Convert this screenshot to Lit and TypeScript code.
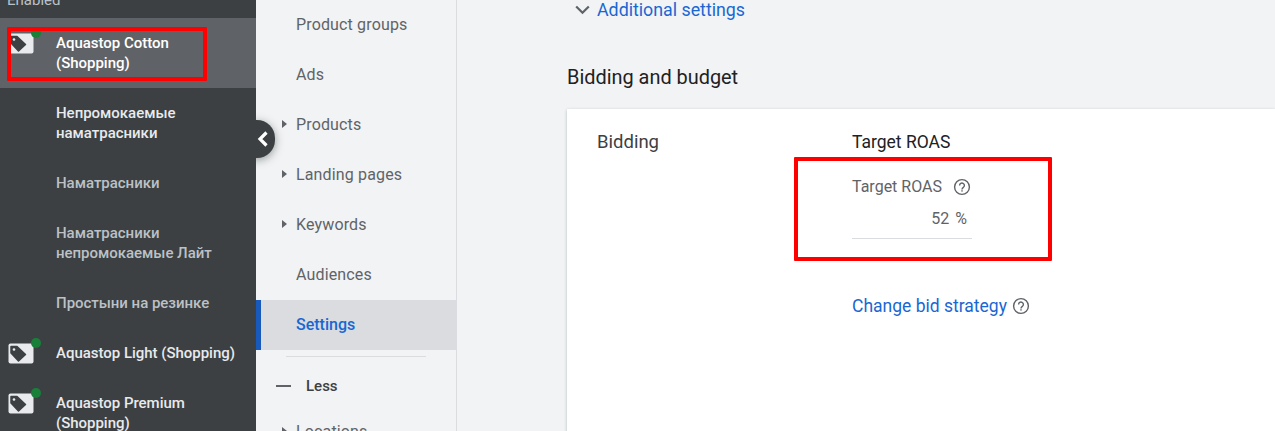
import { LitElement, html, css, svg } from "lit";
import { customElement } from "lit/decorators.js";

const help = svg`<svg class="help" width="18" height="18" viewBox="0 0 18 18"><circle cx="9" cy="9" r="7.4" fill="none" stroke="#5f6368" stroke-width="1.4"/><path d="M6.6 7.400a2.400 2.400 0 1 1 3.900 1.900c-.9.7-1.500 1.100-1.500 2.200" fill="none" stroke="#5f6368" stroke-width="1.400"/><rect x="8.300" y="12.200" width="1.400" height="1.400" fill="#5f6368"/></svg>`;

const campaignIcon = html`<span class="ci"><svg width="26" height="21" viewBox="0 0 26 21"><rect x=".5" y=".5" width="25" height="20" rx="2" fill="#e8eaed"/><path d="M3 3.500H9L17.500 11.500 10.500 18 3 10z" fill="#3c4043" stroke="#3c4043" stroke-width="1.500" stroke-linejoin="round"/><circle cx="6" cy="6.500" r="1.300" fill="#e8eaed"/></svg><i></i></span>`;

@customElement("app-root")
export class AppRoot extends LitElement {
  static styles = css`
    :host { display: block; position: relative; width: 1275px; height: 431px; overflow: hidden; background: #f1f3f4; font-family: Roboto, "Noto Sans", sans-serif; color: #3c4043; }
    .page { display: flex; height: 431px; align-items: flex-start; }
    .side { width: 256px; height: 431px; flex: none; background: #3c4043; overflow: hidden; font-size: 15px; color: #e8eaed; font-weight: 400; }
    .en { height: 18px; display: flex; align-items: flex-end; padding-left: 7px; color: #bdc1c6; line-height: 20px; overflow: hidden; }
    .en span { display: block; margin-bottom: 8px; }
    .row { position: relative; display: flex; align-items: center; box-sizing: border-box; padding: 0 30px 0 56px; height: 50px; line-height: 20px; font-weight: 500; letter-spacing: -.02px; }
    .row.tall { height: 70px; }
    .row.on { background: #5f6368; color: #fff; }
    .row.dim { color: #bdc1c6; }
    .nowrap { white-space: nowrap; }
    .ci { position: absolute; left: 8px; top: 15px; width: 26px; height: 21px; }
    .ci svg { display: block; }
    .ci i { position: absolute; left: 23px; top: -5px; width: 10px; height: 10px; border-radius: 50%; background: #188038; }
    .toggle { position: absolute; left: 239px; top: 120px; width: 36px; height: 38px; border-radius: 19px; background: #3c4043; box-shadow: 0 2px 8px rgba(60,64,67,.5); display: flex; align-items: center; justify-content: center; clip-path: inset(-12px -12px -12px 17px); padding-left: 12px; box-sizing: border-box; }
    .nav { width: 201px; height: 431px; flex: none; box-sizing: border-box; border-right: 1px solid #dadce0; font-size: 16px; letter-spacing: .15px; color: #5f6368; overflow: hidden; }
    .nav .it { position: relative; height: 50px; padding-left: 40px; box-sizing: border-box; display: flex; align-items: center; line-height: 20px; }
    .nav .it.arrow::before { content: ""; position: absolute; left: 26px; top: 50%; margin-top: -5px; border-left: 5px solid #5f6368; border-top: 4px solid transparent; border-bottom: 4px solid transparent; }
    .nav .it.sel { background: #dadce0; color: #1967d2; font-weight: 500; border-left: 5px solid #185abc; padding-left: 35px; letter-spacing: 0; }
    .nav hr { margin: 6px 30px 0; border: 0; border-top: 1px solid #dadce0; height: 0; }
    .nav .less { display: flex; align-items: center; gap: 15px; height: 50px; padding-left: 20px; margin-top: 4px; font-size: 15px; letter-spacing: 0; font-weight: 500; color: #3c4043; }
    .nav .less b { width: 15px; height: 2px; background: #5f6368; }
    .nav .it.loc { margin-top: -4px; }
    .main { flex: 1; min-width: 0; padding-left: 110px; box-sizing: border-box; }
    .adv { display: flex; align-items: center; height: 19px; padding-left: 8px; gap: 7px; font-size: 17.800px; line-height: 19px; color: #1967d2; }
    h2 { margin: 47px 0 0; font-size: 19.900px; line-height: 24px; font-weight: 400; color: #202124; height: 43px; }
    .card { background: #fff; height: 330px; box-shadow: 0 1px 3px rgba(60,64,67,.3); display: flex; padding: 23px 0 0 30px; box-sizing: border-box; }
    .lab { width: 255px; font-size: 18.500px; line-height: 20px; color: #3c4043; }
    .val { width: 200px; }
    .t1 { font-size: 17.500px; line-height: 20px; color: #202124; }
    .fl { display: flex; align-items: center; gap: 11px; margin-top: 25px; font-size: 16px; line-height: 20px; color: #5f6368; }
    .help { display: block; flex: none; }
    .inp { width: 120px; box-sizing: border-box; padding: 12px 5px 9px 0; border-bottom: 1px solid #dadce0; text-align: right; font-size: 16px; line-height: 20px; color: #5f6368; word-spacing: 2px; }
    .chg { display: flex; align-items: center; gap: 5px; margin-top: 57px; font-size: 17.500px; line-height: 20px; color: #1967d2; white-space: nowrap; }
    .red { position: absolute; box-sizing: border-box; border: 4px solid #f00; border-radius: 1px; pointer-events: none; }
    .r1 { left: 7px; top: 27px; width: 200px; height: 54px; }
    .r2 { left: 794px; top: 157px; width: 258px; height: 104px; }
  `;

  render() {
    return html`
      <div class="page">
        <div class="side">
          <div class="en"><span>Enabled</span></div>
          <div class="row tall on">${campaignIcon}<span>Aquastop Cotton (Shopping)</span></div>
          <div class="row tall"><span>Непромокаемые наматрасники</span></div>
          <div class="row dim"><span>Наматрасники</span></div>
          <div class="row tall dim"><span>Наматрасники непромокаемые Лайт</span></div>
          <div class="row dim"><span>Простыни на резинке</span></div>
          <div class="row">${campaignIcon}<span class="nowrap">Aquastop Light (Shopping)</span></div>
          <div class="row tall">${campaignIcon}<span>Aquastop Premium (Shopping)</span></div>
        </div>
        <div class="nav">
          <div class="it">Product groups</div>
          <div class="it">Ads</div>
          <div class="it arrow">Products</div>
          <div class="it arrow">Landing pages</div>
          <div class="it arrow">Keywords</div>
          <div class="it">Audiences</div>
          <div class="it sel">Settings</div>
          <hr />
          <div class="less"><b></b><span>Less</span></div>
          <div class="it arrow loc">Locations</div>
        </div>
        <div class="main">
          <div class="adv"><svg width="15" height="10" viewBox="0 0 15 10"><path d="M1.200 1.500 7.500 7.800 13.800 1.500" fill="none" stroke="#5f6368" stroke-width="2.200"/></svg><span>Additional settings</span></div>
          <h2>Bidding and budget</h2>
          <div class="card">
            <div class="lab">Bidding</div>
            <div class="val">
              <div class="t1">Target ROAS</div>
              <div class="fl"><span>Target ROAS</span>${help}</div>
              <div class="inp">52 %</div>
              <div class="chg"><span>Change bid strategy</span>${help}</div>
            </div>
          </div>
        </div>
      </div>
      <div class="toggle"><svg width="12" height="16" viewBox="0 0 12 16"><path d="M9.500 1.500 3 8 9.500 14.500" fill="none" stroke="#fff" stroke-width="3.200"/></svg></div>
      <div class="red r1"></div>
      <div class="red r2"></div>
    `;
  }
}
